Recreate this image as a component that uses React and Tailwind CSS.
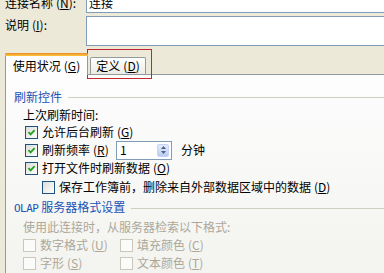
import React from 'react';

const font = { fontFamily: '"Noto Sans CJK SC", "Liberation Sans", sans-serif' };

function Check({ checked, disabled }) {
  return (
    <span
      className={`inline-flex w-[13px] h-[13px] shrink-0 items-center justify-center border ${
        disabled
          ? 'border-[#cac8bb] bg-[#fbfbf9]'
          : 'border-[#1c5180] bg-gradient-to-br from-[#dcdcd7] to-white'
      }`}
    >
      {checked && (
        <svg width="9" height="9" viewBox="0 0 9 9">
          <path d="M1.5 4.2 L3.6 6.4 L7.6 2.2" fill="none" stroke="#21a121" strokeWidth="1.8" />
        </svg>
      )}
    </span>
  );
}

function Key({ k }) {
  return (
    <span className="ml-[3px]">
      (<u>{k}</u>)
    </span>
  );
}

function CheckRow({ label, k, checked, disabled, className = '' }) {
  return (
    <div className={`flex items-center h-[18px] ${className}`}>
      <Check checked={checked} disabled={disabled} />
      <span className={`ml-[4px] ${disabled ? 'text-[#aca899]' : 'text-black'}`}>
        {label}
        <Key k={k} />
      </span>
    </div>
  );
}

function GroupTitle({ children, className = '' }) {
  return (
    <div className={`flex items-center h-[18px] ${className}`}>
      <span className="text-[#2152b4] whitespace-nowrap">{children}</span>
      <span className="ml-[6px] flex-1 h-px bg-[#d0d0bf]" />
    </div>
  );
}

export default function App() {
  return (
    <div
      className="relative w-[384px] h-[273px] overflow-hidden bg-[#ece9d8] text-[12px] leading-[14px] text-black"
      style={font}
    >
      {/* name + description */}
      <div className="-mt-[8px] pl-[5px]">
        <div className="flex items-center h-[21px]">
          <span className="w-[81px] whitespace-nowrap">
            连接名称<Key k="N" />:
          </span>
          <div className="flex-1 -mr-[10px] h-full border border-[#7f9db9] bg-white flex items-center pl-[2px]">
            连接
          </div>
        </div>
        <div className="flex mt-[3px]">
          <span className="w-[81px] pt-[2px] whitespace-nowrap">
            说明<Key k="I" />:
          </span>
          <div className="flex-1 -mr-[10px] h-[30px] border border-[#7f9db9] bg-white" />
        </div>
      </div>

      {/* tabs */}
      <div className="mt-[7px] pl-[5px] flex items-end h-[21px]">
        <div className="relative z-10 -mb-px w-[83px] h-[22px] border border-b-0 border-[#919b9c] bg-[#fdfdfe] rounded-t-[2px] flex items-center justify-center pt-[2px]">
          <span className="absolute left-[-1px] right-[-1px] top-[-1px] h-[3px] rounded-t-[2px] bg-gradient-to-b from-[#e68b2c] to-[#ffc73c]" />
          使用状况<Key k="G" />
        </div>
        <div className="ml-[2px] w-[56px] h-[17px] border border-b-0 border-[#919b9c] bg-gradient-to-b from-white to-[#ecebe6] rounded-t-[2px] flex items-center justify-center">
          定义<Key k="D" />
        </div>
      </div>

      {/* highlight frame */}
      <div className="absolute left-[87px] top-[49px] w-[65px] h-[30px] border border-[#c0282e]" />

      {/* panel */}
      <div className="ml-[5px] -mr-[5px] h-[200px] border border-[#919b9c] bg-gradient-to-b from-[#fdfdfe] to-[#f3f3ef] pl-[8px] pt-[13px]">
        <GroupTitle>刷新控件</GroupTitle>
        <div className="pl-[9px]">
          <div className="flex items-center h-[16px] mt-px">上次刷新时间:</div>
          <CheckRow label="允许后台刷新" k="G" checked className="pl-[2px]" />
          <div className="flex items-center h-[18px] pl-[2px]">
            <Check checked />
            <span className="ml-[4px] w-[74px]">
              刷新频率<Key k="R" />
            </span>
            <div className="flex items-center w-[56px] h-[19px] border border-[#7f9db9] bg-white pl-[3px] pr-[2px]">
              <span className="flex-1">1</span>
              <span className="w-[12px] h-[13px] rounded-[2px] bg-gradient-to-b from-[#e4ecfa] to-[#b9cdf0] border border-[#c3d3fd] flex flex-col items-center justify-center gap-[2px]">
                <svg width="5" height="3" viewBox="0 0 5 3">
                  <path d="M0 3 L2.5 0 L5 3 Z" fill="#4d6185" />
                </svg>
                <svg width="5" height="3" viewBox="0 0 5 3">
                  <path d="M0 0 L2.5 3 L5 0 Z" fill="#4d6185" />
                </svg>
              </span>
            </div>
            <span className="ml-[9px]">分钟</span>
          </div>
          <CheckRow label="打开文件时刷新数据" k="O" checked className="pl-[2px]" />
          <CheckRow
            label="保存工作簿前，删除来自外部数据区域中的数据"
            k="D"
            className="pl-[19px] mt-px"
          />
        </div>
        <GroupTitle className="mt-[3px]">
          <span style={{ fontFamily: '"DejaVu Sans Mono", monospace' }} className="text-[11px] tracking-[-0.5px]">
            OLAP
          </span>{' '}
          服务器格式设置
        </GroupTitle>
        <div className="pl-[9px]">
          <div className="flex items-center h-[18px] mt-px text-[#aca899]">使用此连接时，从服务器检索以下格式:</div>
          <div className="flex">
            <CheckRow label="数字格式" k="U" disabled className="w-[97px]" />
            <CheckRow label="填充颜色" k="C" disabled />
          </div>
          <div className="flex">
            <CheckRow label="字形" k="S" disabled className="w-[97px]" />
            <CheckRow label="文本颜色" k="T" disabled />
          </div>
        </div>
      </div>
    </div>
  );
}
